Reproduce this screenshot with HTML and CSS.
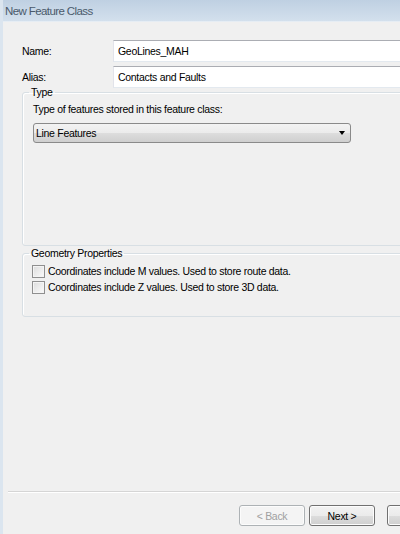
FILE: index.html
```html
<!DOCTYPE html>
<html lang="en">
<head>
	<meta charset="UTF-8">
	<meta name="viewport" content="width=device-width, initial-scale=1.0">
	<title>New Feature Class</title>
	<link rel="stylesheet" href="styles.css">
</head>
<body>
	<div class="dialog">
		<header class="titlebar">
			<span class="title">New Feature Class</span>
		</header>
		<main class="main">
			<div class="row">
				<label class="row-label" for="name">Name:</label>
				<input class="textbox" id="name" type="text" value="GeoLines_MAH">
			</div>
			<div class="row">
				<label class="row-label" for="alias">Alias:</label>
				<input class="textbox" id="alias" type="text" value="Contacts and Faults">
			</div>

			<fieldset class="group group-type">
				<legend class="group-title">Type</legend>
				<p class="group-text">Type of features stored in this feature class:</p>
				<div class="combo">
					<span class="combo-value">Line Features</span>
					<span class="combo-arrow"></span>
				</div>
			</fieldset>

			<fieldset class="group group-geom">
				<legend class="group-title">Geometry Properties</legend>
				<label class="check">
					<span class="check-box"></span>
					Coordinates include M values. Used to store route data.
				</label>
				<label class="check">
					<span class="check-box"></span>
					Coordinates include Z values. Used to store 3D data.
				</label>
			</fieldset>
		</main>
		<footer class="footer">
			<div class="buttons">
				<button class="btn btn-back" disabled>&lt; Back</button>
				<button class="btn btn-next">Next &gt;</button>
				<button class="btn btn-finish" title="Finish"></button>
			</div>
		</footer>
	</div>
</body>
</html>
```

FILE: styles.css
```css
* {
	box-sizing: border-box;
	margin: 0;
	padding: 0;
}

body {
	width: 400px;
	height: 534px;
	overflow: hidden;
	background: #f0f0f0;
	font-family: "Liberation Sans", Arial, sans-serif;
	font-size: 10.5px;
	letter-spacing: -0.3px;
	color: #000;
}

.dialog {
	width: 540px;
	height: 534px;
	display: flex;
	flex-direction: column;
	background: #f0f0f0;
	border-left: 3px solid #dbe5ef;
}

.titlebar {
	height: 22px;
	flex: none;
	display: flex;
	align-items: center;
	padding-left: 2px;
	background: linear-gradient(#bfd0e2, #d3e0ed);
	border-bottom: 1px solid #e6edf4;
}

.title {
	font-size: 11.5px;
	letter-spacing: -0.6px;
	color: #4a5a6b;
}

.main {
	flex: 1;
	padding: 17px 22px 0 19px;
}

.row {
	display: flex;
	align-items: center;
	margin-bottom: 3px;
}

.row-label {
	width: 91px;
	flex: none;
}

.textbox {
	flex: 1;
	height: 22px;
	padding: 0 4px;
	margin-top: 1px;
	font-family: inherit;
	font-size: 10.5px;
	letter-spacing: -0.3px;
	color: #000;
	background: #fff;
	border: 1px solid #e2e3ea;
	border-top-color: #abadb3;
	border-bottom-color: #e3e9ef;
	outline: none;
}

.group {
	border: 1px solid #d8dfe4;
	border-radius: 3px;
	box-shadow: inset 1px 1px 0 #fff;
	padding: 4px 10px 0;
	margin-top: -5px;
}

.group-title {
	padding: 0 2px;
	margin-left: -4px;
	line-height: 13px;
}

.group-type {
	height: 160px;
}

.group-geom {
	height: 70px;
	margin-top: 1px;
	padding-top: 3px;
	padding-left: 9px;
}

.group-geom .group-title {
	margin-left: -3px;
}

.group-text {
	line-height: 13px;
}

.combo {
	width: 318px;
	height: 20px;
	margin-top: 7px;
	display: flex;
	align-items: center;
	justify-content: space-between;
	padding: 0 5px 0 2px;
	border: 1px solid #8a8a8a;
	border-radius: 3px;
	background: linear-gradient(#f3f3f3 0%, #ebebeb 50%, #dddddd 51%, #cfcfcf 100%);
}

.combo-arrow {
	width: 0;
	height: 0;
	border-left: 3.5px solid transparent;
	border-right: 3.5px solid transparent;
	border-top: 4px solid #000;
}

.check {
	display: flex;
	align-items: center;
	gap: 3px;
	height: 16px;
}

.check-box {
	width: 13px;
	height: 13px;
	border: 1px solid #8f8f8f;
	background: linear-gradient(135deg, #dcdcdc, #fbfbfb);
	box-shadow: inset 0 0 0 1px #f4f4f4;
}

.footer {
	flex: none;
	margin-left: 5px;
	border-top: 1px solid #d5d5d5;
	box-shadow: inset 0 1px 0 #fff;
	padding: 13px 0 8px 231px;
}

.buttons {
	display: flex;
}

.btn {
	width: 66px;
	height: 21px;
	font-family: inherit;
	font-size: 10.5px;
	letter-spacing: -0.3px;
	color: #000;
	border: 1px solid #707070;
	border-radius: 3px;
	background: linear-gradient(#f2f2f2 0%, #ebebeb 50%, #dddddd 51%, #cfcfcf 100%);
	box-shadow: inset 0 0 0 1px #fcfcfc;
}

.btn-back {
	color: #a0a0a0;
	border-color: #adb2b5;
	background: #f4f4f4;
}

.btn-next {
	margin-left: 4px;
}

.btn-finish {
	margin-left: 12px;
}
```
